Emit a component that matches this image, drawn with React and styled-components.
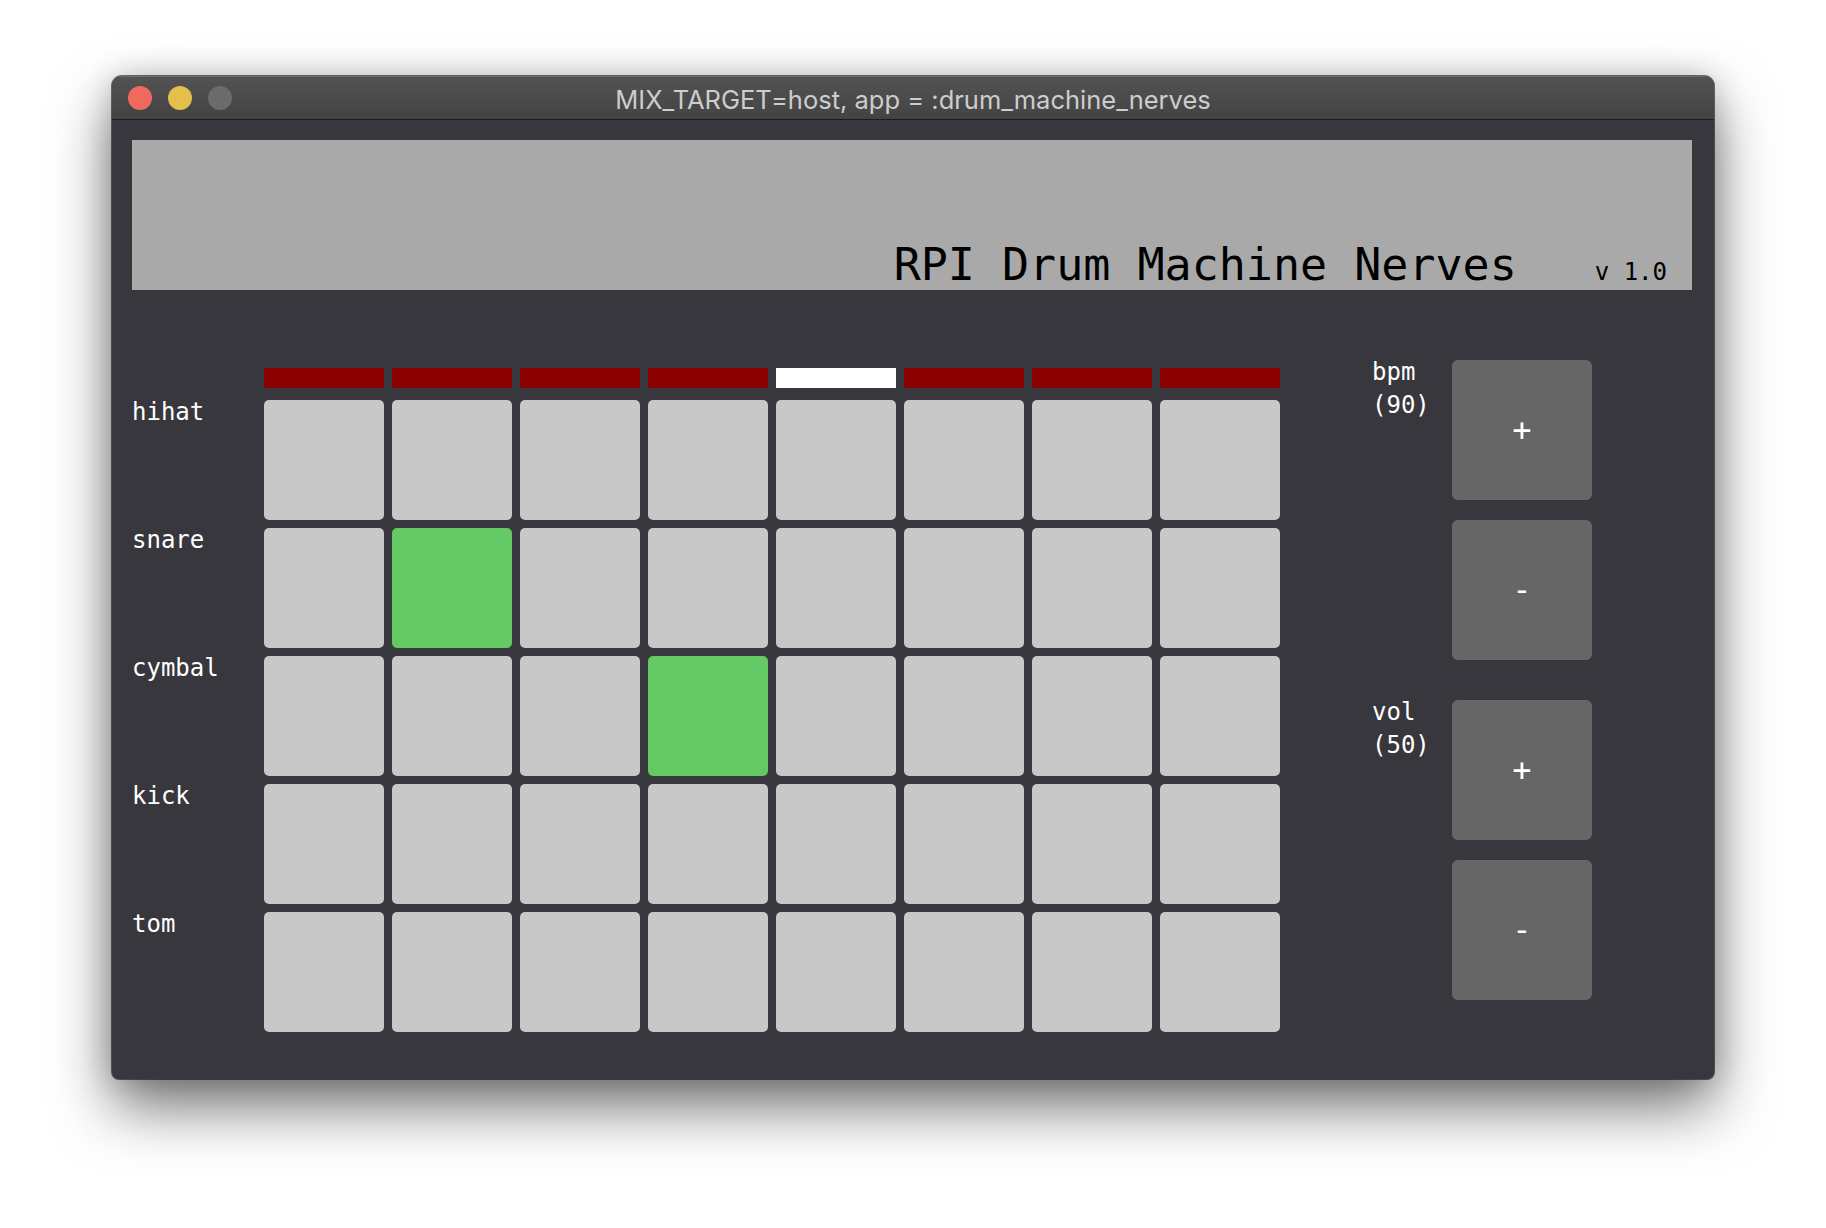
import styled, { createGlobalStyle } from "styled-components";

const GlobalStyle = createGlobalStyle`
  html, body {
    margin: 0;
    padding: 0;
    background: #ffffff;
  }
  body {
    font-family: "DejaVu Sans Mono", "Liberation Mono", monospace;
  }
`;

const tracks = [
  { name: "hihat", steps: [] },
  { name: "snare", steps: [1] },
  { name: "cymbal", steps: [3] },
  { name: "kick", steps: [] },
  { name: "tom", steps: [] },
];

const STEPS = 8;
const CURRENT = 4;

const App = () => {
  return (
    <Page>
      <GlobalStyle />
      <Window>
        <TitleBar>
          <Lights>
            <Light color="#ee6a5f" />
            <Light color="#e4c04b" />
            <Light color="#6b6b6b" />
          </Lights>
          <WindowTitle>MIX_TARGET=host, app = :drum_machine_nerves</WindowTitle>
        </TitleBar>
        <Content>
          <Header>
            <HeaderText>
              <AppName>RPI Drum Machine Nerves</AppName>
              <Version>v 1.0</Version>
            </HeaderText>
          </Header>
          <Main>
            <Sequencer>
              <StepRow>
                {Array.from({ length: STEPS }).map((_, i) => (
                  <StepLight key={i} $on={i === CURRENT} />
                ))}
              </StepRow>
              {tracks.map((t) => (
                <TrackRow key={t.name}>
                  <TrackLabel>{t.name}</TrackLabel>
                  {Array.from({ length: STEPS }).map((_, i) => (
                    <Pad key={i} $active={t.steps.includes(i)} />
                  ))}
                </TrackRow>
              ))}
            </Sequencer>
            <Controls>
              <ControlGroup>
                <ControlLabel>
                  bpm
                  <br />
                  (90)
                </ControlLabel>
                <ButtonStack>
                  <ControlButton>+</ControlButton>
                  <ControlButton>-</ControlButton>
                </ButtonStack>
              </ControlGroup>
              <ControlGroup>
                <ControlLabel>
                  vol
                  <br />
                  (50)
                </ControlLabel>
                <ButtonStack>
                  <ControlButton>+</ControlButton>
                  <ControlButton>-</ControlButton>
                </ButtonStack>
              </ControlGroup>
            </Controls>
          </Main>
        </Content>
      </Window>
    </Page>
  );
};

const Page = styled.div`
  width: 1826px;
  height: 1228px;
  padding: 76px 0 0 112px;
  box-sizing: border-box;
  overflow: hidden;
`;

const Window = styled.div`
  width: 1602px;
  background: #38373d;
  border-radius: 10px 10px 7px 7px;
  box-shadow: 0 0 0 1px rgba(0, 0, 0, 0.55), 0 28px 60px rgba(0, 0, 0, 0.55),
    0 0 30px rgba(0, 0, 0, 0.18);
  overflow: hidden;
`;

const TitleBar = styled.div`
  height: 43px;
  display: grid;
  grid-template-columns: 1fr auto 1fr;
  align-items: center;
  background: linear-gradient(#535353, #434343);
  border-bottom: 1px solid #1c1c1c;
  box-shadow: inset 0 1px 0 rgba(255, 255, 255, 0.15);
`;

const Lights = styled.div`
  display: flex;
  gap: 16px;
  padding-left: 16px;
`;

const Light = styled.span`
  flex: none;
  width: 24px;
  height: 24px;
  border-radius: 50%;
  background: ${(p) => p.color};
`;

const WindowTitle = styled.div`
  padding-top: 3px;
  font-family: Inter, Roboto, "Liberation Sans", sans-serif;
  font-size: 25.5px;
  color: #cdcdcd;
  white-space: nowrap;
`;

const Content = styled.div`
  padding: 20px 22px 47px 20px;
`;

const Header = styled.div`
  height: 150px;
  background: #a9a9a9;
  display: flex;
  justify-content: flex-end;
  align-items: flex-end;
  padding: 0 25px 3px 0;
  box-sizing: border-box;
`;

const HeaderText = styled.div`
  display: flex;
  align-items: baseline;
  gap: 78px;
  color: #000;
`;

const AppName = styled.span`
  font-size: 45px;
  line-height: 1;
`;

const Version = styled.span`
  font-size: 24px;
  line-height: 1;
`;

const Main = styled.div`
  display: flex;
  margin-top: 70px;
`;

const Sequencer = styled.div`
  display: flex;
  flex-direction: column;
  gap: 8px;
  padding-top: 8px;
`;

const StepRow = styled.div`
  display: flex;
  gap: 8px;
  margin-left: 132px;
  margin-bottom: 4px;
`;

const StepLight = styled.div`
  width: 120px;
  height: 20px;
  background: ${(p) => (p.$on ? "#ffffff" : "#8b0000")};
`;

const TrackRow = styled.div`
  display: flex;
  gap: 8px;
`;

const TrackLabel = styled.div`
  width: 124px;
  font-size: 24px;
  line-height: 1;
  color: #ffffff;
`;

const Pad = styled.div`
  width: 120px;
  height: 120px;
  border-radius: 5px;
  background: ${(p) => (p.$active ? "#64c864" : "#c8c8c8")};
`;

const Controls = styled.div`
  display: flex;
  flex-direction: column;
  gap: 40px;
  margin-left: 92px;
`;

const ControlGroup = styled.div`
  display: flex;
`;

const ControlLabel = styled.div`
  width: 80px;
  margin-top: -4px;
  font-size: 24px;
  line-height: 33px;
  color: #ffffff;
`;

const ButtonStack = styled.div`
  display: flex;
  flex-direction: column;
  gap: 20px;
`;

const ControlButton = styled.div`
  width: 140px;
  height: 140px;
  border-radius: 6px;
  background: #666666;
  color: #ffffff;
  font-size: 32px;
  display: flex;
  align-items: center;
  justify-content: center;
`;

export default App;
